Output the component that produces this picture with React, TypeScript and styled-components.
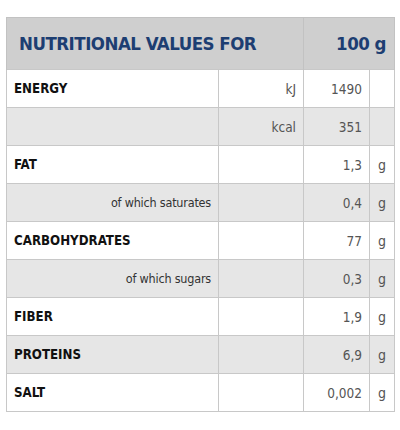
import * as React from "react";
import styled, { createGlobalStyle } from "styled-components";

const GlobalStyle = createGlobalStyle`
	body {
		margin: 0;
		background: #fff;
		font-family: "DejaVu Sans Condensed", "Liberation Sans Narrow", "Liberation Sans", sans-serif;
	}
`;

const Page = styled.div`
	padding: 17px 6px 0 6px;
`;

const Table = styled.table`
	width: 388px;
	border-collapse: collapse;
	table-layout: fixed;
	color: #222;
`;

const HeadCell = styled.th<{ $right?: boolean }>`
	background: #cfcfcf;
	color: #1d3e72;
	font-size: 18.5px;
	letter-spacing: -0.5px;
	font-weight: bold;
	height: 51px;
	padding: 0 ${(p) => (p.$right ? "8px" : "0")} 0 ${(p) => (p.$right ? "0" : "12px")};
	text-align: ${(p) => (p.$right ? "right" : "left")};
	border: 1px solid #c2c2c2;
	border-bottom: none;
	font-stretch: condensed;
`;

const Row = styled.tr<{ $shade?: boolean }>`
	background: ${(p) => (p.$shade ? "#e6e6e6" : "#fff")};
	height: 38px;
`;

const Cell = styled.td`
	border: 1px solid #c8c8c8;
	padding: 0 7px;
	font-size: 13.5px;
	vertical-align: middle;
`;

const Label = styled(Cell)<{ $sub?: boolean }>`
	font-weight: ${(p) => (p.$sub ? "normal" : "bold")};
	text-align: ${(p) => (p.$sub ? "right" : "left")};
	font-size: ${(p) => (p.$sub ? "12.5px" : "13.2px")};
	letter-spacing: ${(p) => (p.$sub ? "-0.2px" : "0")};
	color: ${(p) => (p.$sub ? "#333" : "#111")};
`;

const Light = styled(Cell)`
	text-align: right;
	color: #555;
	font-weight: 300;
`;

const Unit = styled(Cell)`
	text-align: center;
	color: #555;
	padding: 0;
	font-size: 14px;
`;

type Item = { label: string; sub?: boolean; measure?: string; value: string; unit?: string };

const items: Item[] = [
	{ label: "ENERGY", measure: "kJ", value: "1490" },
	{ label: "", measure: "kcal", value: "351" },
	{ label: "FAT", value: "1,3", unit: "g" },
	{ label: "of which saturates", sub: true, value: "0,4", unit: "g" },
	{ label: "CARBOHYDRATES", value: "77", unit: "g" },
	{ label: "of which sugars", sub: true, value: "0,3", unit: "g" },
	{ label: "FIBER", value: "1,9", unit: "g" },
	{ label: "PROTEINS", value: "6,9", unit: "g" },
	{ label: "SALT", value: "0,002", unit: "g" },
];

export default function App() {
	return (
		<Page>
			<GlobalStyle />
			<Table>
				<colgroup>
					<col style={{ width: 212 }} />
					<col style={{ width: 85 }} />
					<col style={{ width: 66 }} />
					<col style={{ width: 25 }} />
				</colgroup>
				<thead>
					<tr>
						<HeadCell colSpan={2}>NUTRITIONAL VALUES FOR</HeadCell>
						<HeadCell colSpan={2} $right>100 g</HeadCell>
					</tr>
				</thead>
				<tbody>
					{items.map((it, i) => (
						<Row key={i} $shade={i % 2 === 1}>
							<Label $sub={it.sub}>{it.label}</Label>
							<Light>{it.measure}</Light>
							<Light>{it.value}</Light>
							<Unit>{it.unit}</Unit>
						</Row>
					))}
				</tbody>
			</Table>
		</Page>
	);
}
